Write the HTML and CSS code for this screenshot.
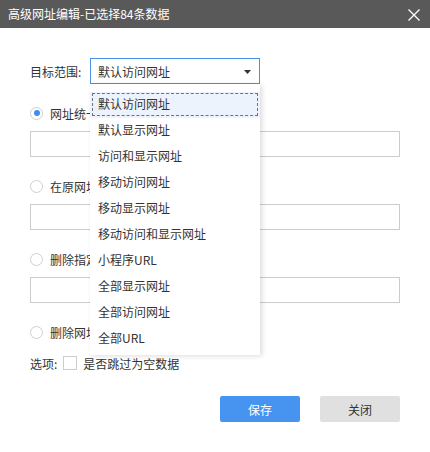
FILE: index.html
```html
<!DOCTYPE html>
<html lang="zh">
<head>
<meta charset="utf-8">
<link rel="stylesheet" href="styles.css">
</head>
<body>
<div class="dialog">
  <div class="header">
    <span class="title">高级网址编辑-已选择84条数据</span>
    <svg class="close" width="12" height="12" viewBox="0 0 12 12"><path d="M0.5 0.5L11.5 11.5M11.5 0.5L0.5 11.5" stroke="#fff" stroke-width="1.3" fill="none"/></svg>
  </div>
  <div class="content">
    <div class="row target">
      <span class="label">目标范围:</span>
      <div class="select">
        <span>默认访问网址</span>
        <svg class="arrow" width="7" height="4" viewBox="0 0 7 4"><path d="M0 0H7L3.5 4Z" fill="#333"/></svg>
      </div>
      <ul class="menu">
        <li class="active">默认访问网址</li>
        <li>默认显示网址</li>
        <li>访问和显示网址</li>
        <li>移动访问网址</li>
        <li>移动显示网址</li>
        <li>移动访问和显示网址</li>
        <li>小程序URL</li>
        <li>全部显示网址</li>
        <li>全部访问网址</li>
        <li>全部URL</li>
      </ul>
    </div>
    <div class="row radio-row first"><span class="radio checked"></span><span class="rlabel">网址统一修改为</span></div>
    <div class="input"></div>
    <div class="row radio-row"><span class="radio"></span><span class="rlabel">在原网址后追加</span></div>
    <div class="input"></div>
    <div class="row radio-row"><span class="radio"></span><span class="rlabel">删除指定内容</span></div>
    <div class="input"></div>
    <div class="row radio-row"><span class="radio"></span><span class="rlabel">删除网址</span></div>
    <div class="row option-row"><span>选项:</span><span class="checkbox"></span><span>是否跳过为空数据</span></div>
    <div class="buttons">
      <button class="btn primary">保存</button>
      <button class="btn">关闭</button>
    </div>
  </div>
</div>
</body>
</html>
```
FILE: styles.css
```css
* { box-sizing: border-box; }
html, body { margin: 0; padding: 0; background: #fff; }
body {
  font-family: "Noto Sans CJK SC", "Noto Sans", sans-serif;
  font-size: 12px;
  color: #333;
}
.dialog { width: 430px; height: 452px; background: #fff; position: relative; overflow: hidden; }
.header {
  height: 28px;
  background: #595959;
  color: #fff;
  display: flex;
  align-items: center;
  justify-content: space-between;
  padding: 0 10px 0 8px;
}
.title { font-size: 12px; line-height: 28px; }
.close { display: block; margin-top: 1px; }
.content { padding: 0 30px; }
.row { display: flex; align-items: center; }
.target { margin-top: 30px; height: 26px; position: relative; }
.label { width: 60px; }
.select {
  width: 170px;
  height: 26px;
  border: 1px solid #4a90e2;
  display: flex;
  align-items: center;
  justify-content: space-between;
  padding: 0 8px 0 7px;
  background: #fff;
}
.arrow { display: block; margin-top: 1px; }
.menu {
  position: absolute;
  left: 60px;
  top: 26px;
  width: 170px;
  height: 271px;
  margin: 0;
  padding: 8px 0 0;
  list-style: none;
  background: #fff;
  box-shadow: 2px 1px 5px rgba(0,0,0,0.14);
  z-index: 10;
  overflow: hidden;
}
.menu li {
  height: 26px;
  line-height: 24px;
  padding-left: 8px;
  position: relative;
}
.menu li.active { background: #ecf3fd; }
.menu li.active::after {
  content: "";
  position: absolute;
  left: 2px; right: 2px; top: 1px; bottom: 2px;
  border: 1px dashed #6b7380;
}
.radio-row { height: 20px; margin-top: 19px; }
.radio {
  flex: none;
  width: 13px; height: 13px;
  border: 1px solid #cfcfcf;
  border-radius: 50%;
  margin-right: 7px;
  position: relative;
  background: #fff;
}
.radio.checked::after {
  content: "";
  position: absolute;
  left: 2.5px; top: 2.5px;
  width: 6px; height: 6px;
  border-radius: 50%;
  background: #3e8ef0;
}
.rlabel {
  max-width: 40px;
  overflow: hidden;
  white-space: nowrap;
}
.input {
  margin-top: 8px;
  width: 370px;
  height: 26px;
  border: 1px solid #ccc;
}
.option-row { height: 20px; margin-top: 11px; }
.checkbox {
  width: 14px; height: 14px;
  border: 1px solid #ccc;
  margin: 0 6px 0 6px;
}
.buttons {
  margin-top: 23px;
  display: flex;
  justify-content: flex-end;
  gap: 20px;
}
.btn {
  width: 80px; height: 26px;
  border: none;
  border-radius: 2px;
  background: #e0e0e0;
  color: #333;
  font-family: inherit;
  font-size: 12px;
  padding: 0;
}
.btn.primary { background: #4694f0; color: #fff; }
```
